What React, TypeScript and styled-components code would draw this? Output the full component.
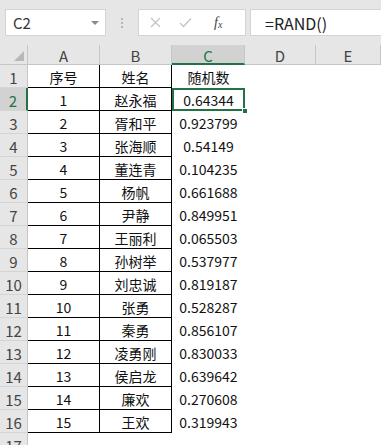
import { FC } from 'react';
import styled, { createGlobalStyle } from 'styled-components';

const GlobalStyle = createGlobalStyle`
  html, body {
    margin: 0;
    padding: 0;
    background: #ffffff;
    overflow: hidden;
  }
  body {
    font-family: "Noto Sans CJK SC", "Noto Sans", sans-serif;
  }
`;

const Page = styled.div`
  width: 381px;
  height: 445px;
  overflow: hidden;
  background: #ffffff;
`;

const FormulaBar = styled.div`
  display: flex;
  align-items: center;
  height: 45px;
  padding: 0 0 0 5px;
  box-sizing: border-box;
  background: #e6e6e6;
`;

const NameBox = styled.div`
  display: flex;
  align-items: center;
  justify-content: space-between;
  width: 101px;
  height: 27px;
  box-sizing: border-box;
  padding: 0 6px 0 7px;
  background: #fff;
  border: 1px solid #d4d4d4;
  font-size: 15px;
  color: #333;
`;

const DropArrow = styled.span`
  width: 0;
  height: 0;
  border-left: 4px solid transparent;
  border-right: 4px solid transparent;
  border-top: 4px solid #8a8a8a;
`;

const Grip = styled.div`
  width: 32px;
  display: flex;
  flex-direction: column;
  align-items: center;
  gap: 2px;

  span {
    width: 2px;
    height: 2px;
    background: #b4b4b4;
  }
`;

const ButtonBox = styled.div`
  display: flex;
  align-items: center;
  width: 108px;
  height: 27px;
  box-sizing: border-box;
  background: #fff;
  border: 1px solid #d4d4d4;
  padding-left: 11px;
  gap: 18px;
  color: #bcbcbc;
`;

const Fx = styled.span`
  font-family: "Liberation Serif", serif;
  font-style: italic;
  font-size: 14px;
  color: #444;
  margin-left: 4px;

  sub {
    font-size: 10px;
    vertical-align: -1px;
  }
`;

const FormulaInput = styled.div`
  flex: 1;
  height: 27px;
  margin-left: 4px;
  box-sizing: border-box;
  background: #fff;
  border: 1px solid #d4d4d4;
  border-right: none;
  display: flex;
  align-items: center;
  padding-left: 14px;
  font-size: 16px;
  color: #222;
`;

const Sheet = styled.div`
  display: grid;
  grid-template-columns: 28px 72px 72px 73px 71px 65px;
  grid-auto-rows: 23px;
  grid-template-rows: 20px;
  font-size: 14px;
  color: #111;
`;

const Corner = styled.div`
  position: relative;
  background: #e6e6e6;
  border-right: 1px solid #c6c6c6;
  border-bottom: 1px solid #c6c6c6;
  box-sizing: border-box;

  &::after {
    content: '';
    position: absolute;
    right: 3px;
    bottom: 3px;
    width: 0;
    height: 0;
    border-left: 10px solid transparent;
    border-bottom: 10px solid #b8b8b8;
  }
`;

const ColHead = styled.div<{ $selected?: boolean }>`
  display: flex;
  align-items: center;
  justify-content: center;
  box-sizing: border-box;
  background: ${(p) => (p.$selected ? '#d2d2d2' : '#e6e6e6')};
  border-right: 1px solid #c6c6c6;
  border-bottom: ${(p) => (p.$selected ? '2px solid #217346' : '1px solid #c6c6c6')};
  color: ${(p) => (p.$selected ? '#217346' : '#444')};
  font-size: 15px;
  padding-top: 2px;
`;

const RowHead = styled.div<{ $selected?: boolean }>`
  display: flex;
  align-items: center;
  justify-content: center;
  box-sizing: border-box;
  background: ${(p) => (p.$selected ? '#d2d2d2' : '#e6e6e6')};
  border-right: ${(p) => (p.$selected ? '2px solid #217346' : '1px solid #c6c6c6')};
  border-bottom: 1px solid #d4d4d4;
  color: ${(p) => (p.$selected ? '#217346' : '#444')};
  font-size: 15px;
  padding-top: 3px;
`;

const Cell = styled.div<{ $bordered?: boolean; $active?: boolean }>`
  position: relative;
  display: flex;
  align-items: center;
  justify-content: center;
  box-sizing: border-box;
  white-space: nowrap;
  padding-top: 1px;
  border-right: ${(p) => (p.$bordered ? '1px solid #000' : 'none')};
  border-bottom: ${(p) => (p.$bordered ? '1px solid #000' : 'none')};
  box-shadow: ${(p) => (p.$active ? 'inset 0 0 0 2px #217346' : 'none')};
`;

const FillHandle = styled.span`
  position: absolute;
  right: -3px;
  bottom: -3px;
  width: 6px;
  height: 6px;
  background: #217346;
  border: 1px solid #fff;
  box-sizing: border-box;
  z-index: 1;
`;

const rows: [string, string, string][] = [
  ['序号', '姓名', '随机数'],
  ['1', '赵永福', '0.64344'],
  ['2', '胥和平', '0.923799'],
  ['3', '张海顺', '0.54149'],
  ['4', '董连青', '0.104235'],
  ['5', '杨帆', '0.661688'],
  ['6', '尹静', '0.849951'],
  ['7', '王丽利', '0.065503'],
  ['8', '孙树举', '0.537977'],
  ['9', '刘忠诚', '0.819187'],
  ['10', '张勇', '0.528287'],
  ['11', '秦勇', '0.856107'],
  ['12', '凌勇刚', '0.830033'],
  ['13', '侯启龙', '0.639642'],
  ['14', '廉欢', '0.270608'],
  ['15', '王欢', '0.319943'],
];

const App: FC = () => {
  return (
    <Page>
      <GlobalStyle />
      <FormulaBar>
        <NameBox>
          C2
          <DropArrow />
        </NameBox>
        <Grip>
          <span />
          <span />
          <span />
        </Grip>
        <ButtonBox>
          <svg width="11" height="11" viewBox="0 0 11 11">
            <path d="M1 1 L10 10 M10 1 L1 10" stroke="#c4c4c4" strokeWidth="1.3" />
          </svg>
          <svg width="13" height="11" viewBox="0 0 13 11">
            <path d="M1 6 L4.5 9.5 L12 1.5" stroke="#c4c4c4" strokeWidth="1.3" fill="none" />
          </svg>
          <Fx>
            f<sub>x</sub>
          </Fx>
        </ButtonBox>
        <FormulaInput>=RAND()</FormulaInput>
      </FormulaBar>

      <Sheet>
        <Corner />
        <ColHead>A</ColHead>
        <ColHead>B</ColHead>
        <ColHead $selected>C</ColHead>
        <ColHead>D</ColHead>
        <ColHead>E</ColHead>

        {rows.map(([a, b, c], i) => (
          <RowCells key={i} index={i + 1} a={a} b={b} c={c} />
        ))}
        <RowHead>17</RowHead>
      </Sheet>
    </Page>
  );
};

interface RowProps {
  index: number;
  a: string;
  b: string;
  c: string;
}

const RowCells: FC<RowProps> = ({ index, a, b, c }) => {
  const active = index === 2;
  return (
    <>
      <RowHead $selected={active}>{index}</RowHead>
      <Cell $bordered>{a}</Cell>
      <Cell $bordered>{b}</Cell>
      <Cell $active={active}>
        {c}
        {active && <FillHandle />}
      </Cell>
      <Cell />
      <Cell />
    </>
  );
};

export default App;
